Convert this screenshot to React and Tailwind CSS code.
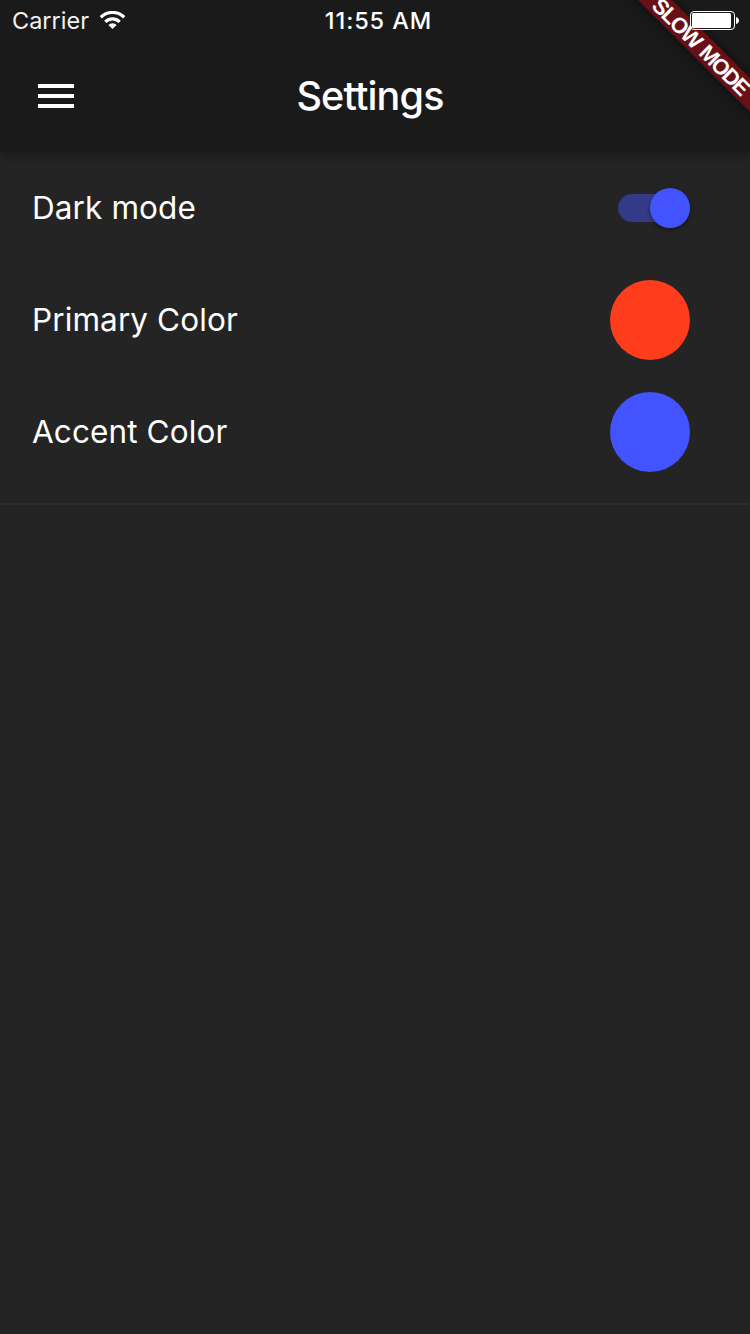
function Row({ label, children }) {
  return (
    <div className="flex h-28 items-center justify-between pl-8 pr-[60px]">
      <span className="text-[31.5px] leading-[40px] tracking-[0.1px]">{label}</span>
      {children}
    </div>
  );
}

export default function App() {
  return (
    <div className="relative h-[1334px] w-[750px] overflow-hidden bg-[#242424] font-['Inter',sans-serif] text-white">
      <header className="relative h-[152px] bg-[#1a1a1a] shadow-[0_4px_10px_rgba(0,0,0,0.3)]">
        <div className="grid h-[42px] grid-cols-3 items-center">
          <div className="flex items-center gap-[11px] pl-3 text-[23.5px] leading-[40px] text-[#f2f2f2]">
            <span>Carrier</span>
            <svg className="mb-[2px]" width="25" height="18" viewBox="0 0 25 18" fill="none" stroke="#fff">
              <path d="M0.8 6.3a16.6 16.6 0 0 1 23.4 0" strokeWidth="3.2" />
              <path d="M5.3 10.8a10.2 10.2 0 0 1 14.4 0" strokeWidth="3.2" />
              <path d="M12.5 18l-4.1-4.1a5.8 5.8 0 0 1 8.2 0z" fill="#fff" stroke="none" />
            </svg>
          </div>
          <div className="pl-[7px] text-center text-[23.5px] font-medium tracking-[0.9px]">11:55 AM</div>
        </div>
        <div className="grid h-[108px] grid-cols-3 items-center">
          <svg className="ml-[38px]" width="36" height="24" fill="#fff">
            <path d="M0 0h36v4H0zM0 10h36v4H0zM0 20h36v4H0z" />
          </svg>
          <h1 className="pr-[10px] pt-[2px] text-center text-[39.5px] font-medium tracking-[-0.85px]">Settings</h1>
        </div>
      </header>
      <main className="border-b-2 border-[#2e2e2e]">
        <Row label="Dark mode">
          <div className="flex h-7 w-[72px] items-center justify-end rounded-full bg-[#333a87]">
            <div className="size-10 shrink-0 rounded-full bg-[#4353ff] shadow-[0_2px_4px_rgba(0,0,0,0.4)]" />
          </div>
        </Row>
        <Row label="Primary Color">
          <div className="size-20 rounded-full bg-[#ff3d1c]" />
        </Row>
        <Row label="Accent Color">
          <div className="size-20 rounded-full bg-[#4353ff]" />
        </Row>
        <div className="h-[15px]" />
      </main>
      <div className="absolute left-[601px] top-[34px] flex h-6 w-[200px] rotate-45 items-center justify-center bg-[#681015] font-['Liberation_Sans',sans-serif] text-[22px] font-bold tracking-[-1.5px] [word-spacing:2px] shadow-[0_0_12px_rgba(0,0,0,0.5)]">
        SLOW MODE
      </div>
      <svg className="absolute left-[690px] top-[10px]" width="50" height="21" fill="#fff">
        <rect x="0.5" y="1.5" width="44" height="18" rx="3.5" fill="none" stroke="#fff" />
        <rect x="2" y="3" width="39" height="15" rx="1.5" />
        <path d="M46 7c4 1 4 6 0 7z" />
      </svg>
    </div>
  );
}
